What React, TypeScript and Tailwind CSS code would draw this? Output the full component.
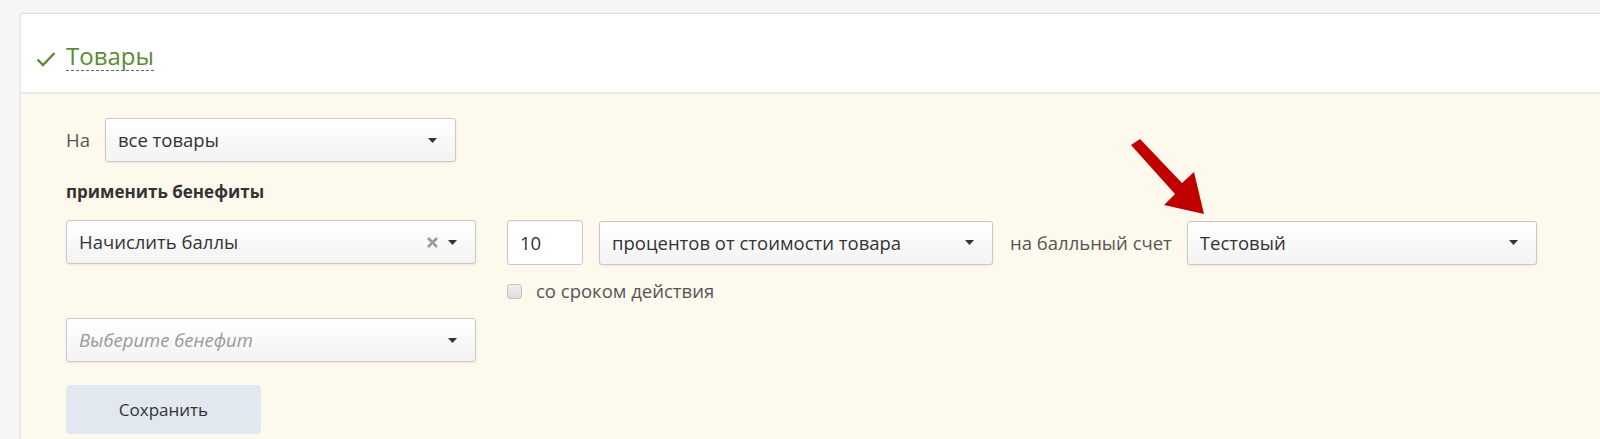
import React from "react";

const FONT = { fontFamily: '"Open Sans", "Noto Sans", sans-serif' };

function Caret() {
  return (
    <svg width="9" height="5" viewBox="0 0 9 5" className="shrink-0">
      <path d="M0 0h9L4.5 5z" fill="#333" />
    </svg>
  );
}

function Select({
  value,
  placeholder,
  clearable,
  className,
}: {
  value?: string;
  placeholder?: string;
  clearable?: boolean;
  className: string;
}) {
  return (
    <div
      className={`flex h-[44px] items-center rounded-[3px] border border-[#c9c9c9] bg-gradient-to-b from-white to-[#f3f3f3] pl-[12px] pr-[18px] shadow-[0_1px_2px_rgba(0,0,0,0.08)] ${className}`}
    >
      {value ? (
        <span className="flex-1 truncate text-[18.5px] text-[#333]">{value}</span>
      ) : (
        <span className="flex-1 truncate text-[18.5px] italic text-[#999]">{placeholder}</span>
      )}
      {clearable && (
        <svg width="13" height="13" viewBox="0 0 13 13" className="mr-[9px] shrink-0">
          <path d="M2 2l9 9M11 2l-9 9" stroke="#9a9a9a" strokeWidth="2.6" />
        </svg>
      )}
      <Caret />
    </div>
  );
}

export default function App() {
  return (
    <div className="relative h-[439px] overflow-hidden bg-[#f6f6f4] pl-[20px] pt-[13px]" style={FONT}>
      <div className="-mr-[10px] rounded-tl-[4px] border border-r-0 border-[#e2e2e2] bg-white shadow-[0_0_3px_rgba(0,0,0,0.06)]">
        {/* header */}
        <div className="flex h-[80px] items-start border-b-2 border-[#ebebe8] pl-[15px] pt-[28px]">
          <svg width="20" height="16" viewBox="0 0 20 16" className="mt-[9px]">
            <path d="M1.5 8.5l5.5 5.5L18.5 2" fill="none" stroke="#5f8a35" strokeWidth="2.4" />
          </svg>
          <span className="ml-[10px] inline-block border-b border-dashed border-[#666] text-[24px] leading-[28px] text-[#5d8a36]">
            Товары
          </span>
        </div>

        {/* body */}
        <div className="h-[400px] bg-[#fdf9ed] pl-[45px] pt-[24px]">
          <div className="flex items-center gap-[15px]">
            <span className="text-[18.5px] text-[#555]">На</span>
            <Select value="все товары" className="w-[351px]" />
          </div>

          <div className="mt-[18px] text-[17px] font-bold leading-[24px] text-[#333]">применить бенефиты</div>

          <div className="mt-[16px] flex items-start">
            <Select value="Начислить баллы" clearable className="w-[410px]" />
            <div className="ml-[31px]">
              <div className="flex items-center">
                <div className="flex h-[45px] w-[76px] items-center rounded-[3px] border border-[#c9c9c9] bg-white pl-[12px] text-[18.5px] text-[#333] shadow-[inset_0_1px_2px_rgba(0,0,0,0.06)]">
                  10
                </div>
                <Select value="процентов от стоимости товара" className="ml-[16px] w-[394px]" />
                <span className="ml-[17px] text-[18.5px] text-[#555]">на балльный счет</span>
                <Select value="Тестовый" className="ml-[15px] w-[350px]" />
              </div>
              <label className="mt-[15px] flex items-center gap-[14px]">
                <span className="h-[15px] w-[15px] rounded-[3px] border border-[#c4c4c4] bg-gradient-to-b from-[#f0f0f0] to-[#dcdcdc]" />
                <span className="text-[18.5px] leading-[22px] text-[#555]">со сроком действия</span>
              </label>
            </div>
          </div>

          <Select placeholder="Выберите бенефит" className="mt-[16px] w-[410px]" />

          <button className="mt-[23px] h-[49px] w-[195px] rounded-[4px] bg-[#e2e8ef] text-[17px] text-[#333]">
            Сохранить
          </button>
        </div>
      </div>

      {/* red pointer arrow */}
      <svg
        className="pointer-events-none absolute left-[1124px] top-[137px]"
        width="92"
        height="88"
        viewBox="0 0 92 88"
      >
        <path d="M7 8 L16 2 L58 46 L70 35 L80 77 L40 68 L51 57 Z" fill="#c00000" />
      </svg>
    </div>
  );
}
